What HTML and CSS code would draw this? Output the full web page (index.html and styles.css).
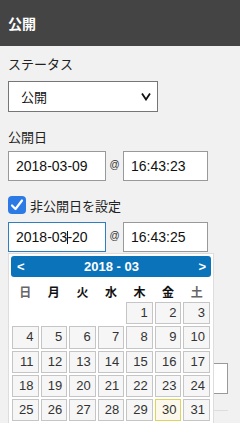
FILE: index.html
```html
<!DOCTYPE html>
<html>
<head>
    <title>公開</title>
    <link rel="stylesheet" href="styles.css">
</head>
<body>
    <div class="header">公開</div>
    <div class="panel">
        <div class="label">ステータス</div>
        <div class="select">
            <span>公開</span>
            <svg width="10" height="9" viewBox="0 0 10 9"><path d="M1 1.5 L5 7.5 L9 1.5" fill="none" stroke="#111" stroke-width="1.8"/></svg>
        </div>

        <div class="label date-label">公開日</div>
        <div class="dt-row">
            <div class="field date">2018-03-09</div>
            <span class="at">@</span>
            <div class="field time">16:43:23</div>
        </div>

        <div class="check-row">
            <span class="checkbox">
                <svg width="18" height="18" viewBox="0 0 18 18"><path d="M4 9.5 L7.5 13 L14 4.5" fill="none" stroke="#fff" stroke-width="2.2" stroke-linecap="round" stroke-linejoin="round"/></svg>
            </span>
            <span>非公開日を設定</span>
        </div>
        <div class="dt-row second">
            <div class="field date focus">2018-03<span class="caret"></span>-20</div>
            <span class="at">@</span>
            <div class="field time">16:43:25</div>
        </div>

        <div class="under">
            <div class="field wide"></div>
            <div class="rule"></div>
        </div>
    </div>

    <!-- date picker popup, lies over the form -->
    <div class="datepicker">
        <div class="dp-head">
            <span>&lt;</span>
            <span>2018 - 03</span>
            <span>&gt;</span>
        </div>
        <table class="dp-table">
            <thead>
                <tr>
                    <th class="sun">日</th><th>月</th><th>火</th><th>水</th><th>木</th><th>金</th><th class="sat">土</th>
                </tr>
            </thead>
            <tbody>
                <tr><td></td><td></td><td></td><td></td><td><span class="day">1</span></td><td><span class="day">2</span></td><td><span class="day">3</span></td></tr>
                <tr><td><span class="day">4</span></td><td><span class="day">5</span></td><td><span class="day">6</span></td><td><span class="day">7</span></td><td><span class="day">8</span></td><td><span class="day">9</span></td><td><span class="day">10</span></td></tr>
                <tr><td><span class="day">11</span></td><td><span class="day">12</span></td><td><span class="day">13</span></td><td><span class="day">14</span></td><td><span class="day">15</span></td><td><span class="day">16</span></td><td><span class="day">17</span></td></tr>
                <tr><td><span class="day">18</span></td><td><span class="day">19</span></td><td><span class="day">20</span></td><td><span class="day">21</span></td><td><span class="day">22</span></td><td><span class="day">23</span></td><td><span class="day">24</span></td></tr>
                <tr><td><span class="day">25</span></td><td><span class="day">26</span></td><td><span class="day">27</span></td><td><span class="day">28</span></td><td><span class="day">29</span></td><td><span class="day today">30</span></td><td><span class="day">31</span></td></tr>
            </tbody>
        </table>
    </div>
</body>
</html>
```

FILE: styles.css
```css
body {
    margin: 0;
    background: #f1f1f1;
    font-family: "Liberation Sans", "Noto Sans CJK JP", sans-serif;
    color: #222;
}

.header {
    height: 46px;
    background: #444;
    color: #fff;
    font-weight: bold;
    font-size: 14px;
    display: flex;
    align-items: center;
    padding-left: 8px;
}

.panel {
    padding: 0 8px;
}

.label {
    font-size: 13px;
    line-height: 18px;
    margin-top: 10px;
}

.select {
    margin-top: 7px;
    width: 150px;
    height: 31px;
    box-sizing: border-box;
    border: 1px solid #767676;
    background: #fff;
    display: flex;
    align-items: center;
    justify-content: space-between;
    padding: 0 6px 0 12px;
    font-size: 13px;
    color: #111;
}

.date-label {
    margin-top: 17px;
}

.dt-row {
    display: flex;
    align-items: flex-start;
    margin-top: 4px;
}

.field {
    height: 30px;
    box-sizing: border-box;
    border: 1px solid #999;
    background: #fff;
    font-size: 14px;
    line-height: 28px;
    padding-left: 7px;
    color: #111;
}

.date {
    width: 98px;
}

.time {
    width: 85px;
}

.focus {
    border-color: #2e7fc1;
}

.caret {
    display: inline-block;
    width: 1px;
    height: 13px;
    background: #111;
    vertical-align: -2px;
    margin-right: -1px;
}

.at {
    width: 17px;
    text-align: center;
    font-size: 10px;
    line-height: 14px;
    padding-top: 7px;
    color: #333;
}

.check-row {
    display: flex;
    align-items: center;
    gap: 4px;
    height: 18px;
    margin-top: 15px;
    font-size: 13px;
}

.checkbox {
    width: 18px;
    height: 18px;
    border-radius: 4px;
    background: #2c7be5;
    display: flex;
}

.second {
    margin-top: 8px;
}

.under .wide {
    width: 220px;
    height: 31px;
    margin-top: 111px;
}

.rule {
    width: 220px;
    height: 1px;
    margin-top: 16px;
    background: #ddd;
}

.datepicker {
    position: absolute;
    left: 8px;
    top: 253px;
    width: 200px;
    padding: 2px 2px 10px;
    border: 1px solid #ddd;
    background: #fff;
}

.dp-head {
    height: 21px;
    background: #0a73b9;
    border-radius: 3px;
    color: #fff;
    font-weight: bold;
    font-size: 13px;
    display: flex;
    align-items: center;
    justify-content: space-between;
    padding: 0 5px 0 6px;
}

.dp-table {
    width: 200px;
    border-collapse: collapse;
    table-layout: fixed;
}

.dp-table th {
    padding: 10px 0 1px;
    line-height: 13px;
    font-size: 12px;
    font-weight: bold;
    color: #111;
}

.dp-table th.sun,
.dp-table th.sat {
    color: #666;
}

.dp-table td {
    padding: 1px;
}

.day {
    display: block;
    border: 1px solid #c5c5c5;
    background: #f6f6f6;
    text-align: right;
    padding-right: 4px;
    line-height: 20.3px;
    font-size: 13px;
    color: #333;
}

.day.today {
    border-color: #dad55e;
    background: #fcf9ea;
}
```
